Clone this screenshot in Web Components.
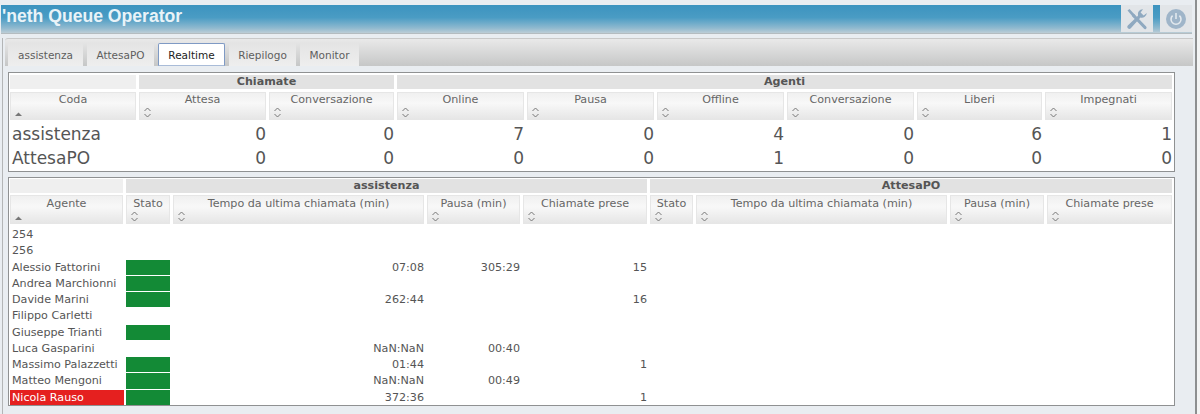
<!DOCTYPE html>
<html>
<head>
<meta charset="utf-8">
<title>Neth Queue Operator</title>
<style>
  html, body { margin: 0; height: 414px; overflow: hidden; background: #f3f4f4; }
  body { font-family: "DejaVu Sans", sans-serif; }
</style>
</head>
<body>
<nq-app></nq-app>

<template id="nq-app-template">
  <style>
    :host {
      display: block;
      width: 1197px;
      height: 414px;
      box-sizing: border-box;
      padding-top: 5px;
      background: #e9edf1;
      border-right: 2px solid #8d8f90;
    }
    .frame {
      margin: 0 2px 0 2px;
      border-left: 1px solid #b3b5b6;
      height: 376px;
    }
    .panels {
      display: flex;
      flex-direction: column;
      gap: 5px;
      padding: 0 18px 0 5px;
    }
  </style>
  <nq-header></nq-header>
  <div class="frame">
    <nq-tabs></nq-tabs>
    <div class="panels">
      <nq-table id="queues"></nq-table>
      <nq-table id="agents"></nq-table>
    </div>
  </div>
</template>

<template id="nq-header-template">
  <style>
    :host {
      display: flex;
      align-items: center;
      justify-content: space-between;
      height: 28px;
      margin: 0 3px 0 1px;
      padding-left: 1px;
      background: linear-gradient(#3c93bf 0, #4a9cc4 45%, #8fb9cf 82%, #bccdd6 100%);
      border-bottom: 1px solid #b4bcc0;
      overflow: hidden;
    }
    h1 {
      margin: 0 0 6px;
      font: bold 17.6px "Liberation Sans", sans-serif;
      color: #e9f3f8;
    }
    .tools { display: flex; gap: 7px; align-self: flex-start; }
    button {
      width: 32px;
      height: 27px;
      padding: 0;
      border: 0;
      background: #e2e5e8;
      display: flex;
      align-items: center;
      justify-content: center;
    }
  </style>
  <h1>'neth Queue Operator</h1>
  <div class="tools">
    <button aria-label="Strumenti">
      <svg width="22" height="22" viewBox="0 0 22 22" fill="none">
        <path d="M1.5 2.5 L3.5 1 L9.5 7.5 L7.5 9.5 Z" fill="#8fa9c0"/>
        <path d="M7.5 7.5 L19 19.5" stroke="#8fa9c0" stroke-width="3.2" stroke-linecap="round"/>
        <path d="M20.8 5 A5 5 0 0 1 14.5 9.5 L4.8 20.2 A2 2 0 0 1 1.8 17.5 L12 7.8 A5 5 0 0 1 17 1.2 L14.6 4.4 L17.6 7.4 Z" fill="#8fa9c0"/>
      </svg>
    </button>
    <button aria-label="Esci">
      <svg width="22" height="22" viewBox="0 0 22 22" fill="none">
        <circle cx="11" cy="11" r="10" fill="#9fb5c9"/>
        <path d="M7.6 7.6 A5 5 0 1 0 14.4 7.6" stroke="#e3e9ee" stroke-width="1.6"/>
        <path d="M11 5 V11" stroke="#e3e9ee" stroke-width="1.6"/>
      </svg>
    </button>
  </div>
</template>

<template id="nq-tabs-template">
  <style>
    :host {
      display: flex;
      align-items: flex-end;
      gap: 4px;
      height: 27px;
      margin: 4px 0 6px 2px;
      padding-left: 3px;
      background: linear-gradient(#e9e9e9, #c6c7c7);
      border-top: 1px solid #c9c9c9;
      border-radius: 3px 0 0 0;
      font: 10.5px "DejaVu Sans", sans-serif;
      color: #5e5e5e;
    }
    span {
      display: flex;
      align-items: center;
      justify-content: center;
      box-sizing: border-box;
      height: 23px;
      background: linear-gradient(#e4e4e4, #eeeeee);
    }
    .on {
      background: #fff;
      color: #222;
      border: 1px solid #7f9ac4;
      border-bottom-color: #a9bcd8;
      border-radius: 2px 2px 0 0;
    }
  </style>
  <span style="width:75px">assistenza</span>
  <span style="width:67px">AttesaPO</span>
  <span class="on" style="width:67px">Realtime</span>
  <span style="width:67px">Riepilogo</span>
  <span style="width:59px">Monitor</span>
</template>

<template id="nq-table-template">
  <style>
    :host {
      display: block;
      box-sizing: border-box;
      border: 1px solid #8f9192;
      background: #fff;
      padding: 2px 1px 0;
      color: #555;
      font: 11.15px "DejaVu Sans", sans-serif;
    }
    :host([size="small"]) { padding-top: 1px; }
    .grid { display: grid; column-gap: 3px; }
    .group {
      height: 14px;
      margin-bottom: 3px;
      background: #e2e2e2;
      text-align: center;
      font-weight: bold;
      line-height: 14px;
    }
    :host([size="small"]) .group { margin-bottom: 2px; }
    .group.blank { background: #efefef; }
    .head {
      position: relative;
      box-sizing: border-box;
      height: 28px;
      text-align: center;
      line-height: 14px;
      border: 1px solid #e6e6e6;
      background: linear-gradient(#f0f0f0, #f8f8f8 40%, #e6e6e6);
      color: #666;
    }
    :host([size="small"]) .head { height: 29px; line-height: 15px; }
    .head svg { position: absolute; left: 3px; bottom: 1px; }
    .cell { white-space: nowrap; }
    .num { text-align: right; }
    .bar { background: #138a36; margin: 1px 0 0; }
    .alert { background: #e5201f; color: #fff; margin: 1px -1px 0 0; line-height: 15px; }
    .rows { display: grid; column-gap: 3px; margin-top: 2px; }
    :host([size="big"]) .rows { font-size: 17px; grid-auto-rows: 24px; line-height: 24px; }
    :host([size="small"]) .rows { grid-auto-rows: 16.27px; line-height: 17.5px; }
    .name { padding-left: 2px; }
  </style>
  <div class="grid" id="head"></div>
  <div class="rows" id="rows"></div>
</template>

<script>
const SORT_BOTH = '<svg width="9" height="11" viewBox="0 0 9 11" fill="none" stroke="#777" stroke-width="1"><path d="M1.5 4 L4.5 1 L7.5 4 M1.5 7 L4.5 10 L7.5 7"/></svg>';
const SORT_UP = '<svg width="9" height="11" viewBox="0 0 9 11"><path d="M1 9 L4.5 5.5 L8 9 Z" fill="#777"/></svg>';

class NqElement extends HTMLElement {
  constructor() {
    super();
    let template = document.getElementById(`${this.constructor.is}-template`);
    this.attachShadow({mode: 'open'});
    this.shadowRoot.appendChild(template.content.cloneNode(true));
  }
}

class NqHeader extends NqElement {
  static get is() { return 'nq-header'; }
}

class NqTabs extends NqElement {
  static get is() { return 'nq-tabs'; }
}

class NqTable extends NqElement {
  static get is() { return 'nq-table'; }
  // config: columns, groups [label, span], heads, rows
  set config(c) {
    this.setAttribute('size', c.size);
    this.style.height = c.height + 'px';
    let head = this.shadowRoot.getElementById('head');
    let rows = this.shadowRoot.getElementById('rows');
    head.style.gridTemplateColumns = c.columns;
    rows.style.gridTemplateColumns = c.columns;
    c.groups.forEach(([label, span]) => {
      let g = document.createElement('div');
      g.className = label ? 'group' : 'group blank';
      g.style.gridColumn = `span ${span}`;
      g.textContent = label;
      head.appendChild(g);
    });
    c.heads.forEach((label, i) => {
      let h = document.createElement('div');
      h.className = 'head';
      h.innerHTML = (i === 0 ? SORT_UP : SORT_BOTH);
      h.prepend(label);
      head.appendChild(h);
    });
    c.rows.forEach((row) => {
      row.forEach((value, i) => {
        let d = document.createElement('div');
        if (i === 0) {
          d.className = 'cell name';
          if (row.alert) d.classList.add('alert');
          d.textContent = value;
        } else if (value === 'ok') {
          d.className = 'bar';
        } else {
          d.className = 'cell num';
          d.textContent = value;
        }
        rows.appendChild(d);
      });
    });
  }
}

class NqApp extends NqElement {
  static get is() { return 'nq-app'; }
  connectedCallback() {
    this.shadowRoot.getElementById('queues').config = {
      size: 'big',
      height: 100,
      columns: '126px 127px 125px 127px 127px 127px 127px 125px 127px',
      groups: [['', 1], ['Chiamate', 2], ['Agenti', 6]],
      heads: ['Coda', 'Attesa', 'Conversazione', 'Online', 'Pausa', 'Offline', 'Conversazione', 'Liberi', 'Impegnati'],
      rows: [
        ['assistenza', '0', '0', '7', '0', '4', '0', '6', '1'],
        ['AttesaPO', '0', '0', '0', '0', '1', '0', '0', '0']
      ]
    };
    let agent = (name, ok, last, pause, taken) =>
      [name, ok ? 'ok' : '', last || '', pause || '', taken || '', '', '', '', ''];
    let nicola = agent('Nicola Rauso', true, '372:36', '', '1');
    nicola.alert = true;
    this.shadowRoot.getElementById('agents').config = {
      size: 'small',
      height: 229,
      columns: '113px 44px 251px 93px 124px 43px 251px 94px 125px',
      groups: [['', 1], ['assistenza', 4], ['AttesaPO', 4]],
      heads: ['Agente', 'Stato', 'Tempo da ultima chiamata (min)', 'Pausa (min)', 'Chiamate prese', 'Stato', 'Tempo da ultima chiamata (min)', 'Pausa (min)', 'Chiamate prese'],
      rows: [
        agent('254'),
        agent('256'),
        agent('Alessio Fattorini', true, '07:08', '305:29', '15'),
        agent('Andrea Marchionni', true),
        agent('Davide Marini', true, '262:44', '', '16'),
        agent('Filippo Carletti'),
        agent('Giuseppe Trianti', true),
        agent('Luca Gasparini', false, 'NaN:NaN', '00:40'),
        agent('Massimo Palazzetti', true, '01:44', '', '1'),
        agent('Matteo Mengoni', true, 'NaN:NaN', '00:49'),
        nicola
      ]
    };
  }
}

customElements.define(NqHeader.is, NqHeader);
customElements.define(NqTabs.is, NqTabs);
customElements.define(NqTable.is, NqTable);
customElements.define(NqApp.is, NqApp);
</script>
</body>
</html>
